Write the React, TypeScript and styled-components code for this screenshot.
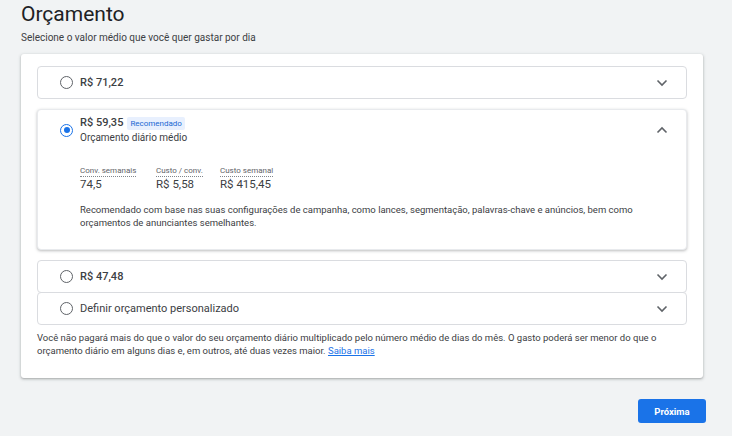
import React, { useState } from "react";
import styled, { createGlobalStyle } from "styled-components";

const GlobalStyle = createGlobalStyle`
  html, body {
    margin: 0;
    padding: 0;
    background: #f1f3f4;
    font-family: Roboto, "Liberation Sans", Arial, sans-serif;
    color: #202124;
  }
`;

const Page = styled.div`
  width: 732px;
  height: 436px;
  box-sizing: border-box;
  padding: 0 26px 0 21px;
  display: flex;
  flex-direction: column;
  overflow: hidden;
`;

const Title = styled.h1`
  margin: 2px 0 0;
  font-size: 21px;
  font-weight: 400;
  line-height: 24px;
  color: #202124;
`;

const Subtitle = styled.p`
  margin: 5px 0 0;
  font-size: 10px;
  line-height: 14px;
  color: #3c4043;
`;

const Card = styled.section`
  margin-top: 9px;
  width: 682px;
  box-sizing: border-box;
  background: #fff;
  border-radius: 3px;
  box-shadow: 0 1px 2px rgba(60, 64, 67, 0.3), 0 1px 3px 1px rgba(60, 64, 67, 0.12);
  padding: 12px 16px 21px;
  display: flex;
  flex-direction: column;
`;

const Option = styled.div<{ $expanded?: boolean; $gap: number }>`
  margin-top: ${(p) => p.$gap}px;
  border: 1px solid ${(p) => (p.$expanded ? "#e8eaed" : "#dadce0")};
  border-radius: 4px;
  background: #fff;
  box-shadow: ${(p) =>
    p.$expanded ? "0 1px 3px rgba(60, 64, 67, 0.35)" : "none"};
`;

const OptionHead = styled.div<{ $tall?: boolean }>`
  display: flex;
  align-items: center;
  height: ${(p) => (p.$tall ? 40 : 31)}px;
  padding: 0 18px 0 22px;
  cursor: pointer;
`;

const Radio = styled.span<{ $checked?: boolean }>`
  width: 13px;
  height: 13px;
  box-sizing: border-box;
  border-radius: 50%;
  border: 1.5px solid ${(p) => (p.$checked ? "#1a73e8" : "#5f6368")};
  display: flex;
  align-items: center;
  justify-content: center;
  flex: none;
  margin-right: 7px;

  &::after {
    content: "";
    display: ${(p) => (p.$checked ? "block" : "none")};
    width: 6px;
    height: 6px;
    border-radius: 50%;
    background: #1a73e8;
  }
`;

const HeadText = styled.div`
  flex: 1;
  display: flex;
  flex-direction: column;
`;

const Amount = styled.span<{ $light?: boolean }>`
  font-size: 11px;
  font-weight: ${(p) => (p.$light ? 400 : 500)};
  line-height: 14px;
  color: #3c4043;
  display: flex;
  align-items: center;
`;

const Badge = styled.span`
  margin-left: 4px;
  padding: 1px 3px;
  font-size: 8px;
  line-height: 11px;
  font-weight: 400;
  color: #1967d2;
  background: #e8f0fe;
  border-radius: 2px;
`;

const Caption = styled.span`
  margin-top: 1px;
  font-size: 10px;
  line-height: 13px;
  color: #3c4043;
`;

const Chevron = ({ up }: { up?: boolean }) => (
  <svg width="12" height="8" viewBox="0 0 12 8" style={{ flex: "none" }}>
    <path
      d={up ? "M1.5 6.5 L6 2 L10.5 6.5" : "M1.5 1.5 L6 6 L10.5 1.5"}
      fill="none"
      stroke="#5f6368"
      strokeWidth="1.6"
    />
  </svg>
);

const Body = styled.div`
  padding: 16px 20px 20px 42px;
`;

const Stats = styled.div`
  display: flex;
`;

const Stat = styled.div<{ $w: number }>`
  width: ${(p) => p.$w}px;
  display: flex;
  flex-direction: column;
`;

const StatLabel = styled.span`
  align-self: flex-start;
  font-size: 8px;
  line-height: 10px;
  color: #5f6368;
  border-bottom: 1px dotted #80868b;
`;

const StatValue = styled.span`
  font-size: 11.5px;
  line-height: 14px;
  color: #3c4043;
`;

const Note = styled.p`
  margin: 12px 0 0;
  font-size: 9.5px;
  line-height: 13px;
  color: #3c4043;
`;

const Footer = styled.p`
  margin: 6px 0 0;
  font-size: 9.5px;
  line-height: 13px;
  color: #3c4043;

  a {
    color: #1a73e8;
    text-decoration: underline;
  }
`;

const Actions = styled.div`
  display: flex;
  justify-content: flex-end;
  margin-top: 21px;
  width: 685px;
`;

const PrimaryButton = styled.button`
  width: 68px;
  height: 24px;
  border: none;
  border-radius: 3px;
  background: #1a73e8;
  color: #fff;
  font-family: Roboto, "Liberation Sans", Arial, sans-serif;
  font-size: 9.5px;
  font-weight: 700;
  cursor: pointer;
`;

const options = [
  { id: "a", label: "R$ 71,22" },
  { id: "b", label: "R$ 59,35" },
  { id: "c", label: "R$ 47,48" },
  { id: "d", label: "Definir orçamento personalizado", light: true },
];

export default function App() {
  const [selected, setSelected] = useState("b");

  return (
    <>
      <GlobalStyle />
      <Page>
        <Title>Orçamento</Title>
        <Subtitle>Selecione o valor médio que você quer gastar por dia</Subtitle>
        <Card>
          {options.map((o, i) => {
            const open = o.id === "b";
            const gap = i === 0 ? 0 : i === 3 ? -1 : 10;
            return (
              <Option key={o.id} $expanded={open} $gap={gap}>
                <OptionHead $tall={open} onClick={() => setSelected(o.id)}>
                  <Radio $checked={selected === o.id} />
                  <HeadText>
                    <Amount $light={o.light}>
                      {o.label}
                      {open && <Badge>Recomendado</Badge>}
                    </Amount>
                    {open && <Caption>Orçamento diário médio</Caption>}
                  </HeadText>
                  <Chevron up={open} />
                </OptionHead>
                {open && (
                  <Body>
                    <Stats>
                      <Stat $w={76}>
                        <StatLabel>Conv. semanais</StatLabel>
                        <StatValue>74,5</StatValue>
                      </Stat>
                      <Stat $w={64}>
                        <StatLabel>Custo / conv.</StatLabel>
                        <StatValue>R$ 5,58</StatValue>
                      </Stat>
                      <Stat $w={80}>
                        <StatLabel>Custo semanal</StatLabel>
                        <StatValue>R$ 415,45</StatValue>
                      </Stat>
                    </Stats>
                    <Note>
                      Recomendado com base nas suas configurações de campanha, como
                      lances, segmentação, palavras-chave e anúncios, bem como
                      <br />
                      orçamentos de anunciantes semelhantes.
                    </Note>
                  </Body>
                )}
              </Option>
            );
          })}
          <Footer>
            Você não pagará mais do que o valor do seu orçamento diário multiplicado
            pelo número médio de dias do mês. O gasto poderá ser menor do que o
            <br />
            orçamento diário em alguns dias e, em outros, até duas vezes maior.{" "}
            <a href="#">Saiba mais</a>
          </Footer>
        </Card>
        <Actions>
          <PrimaryButton>Próxima</PrimaryButton>
        </Actions>
      </Page>
    </>
  );
}
